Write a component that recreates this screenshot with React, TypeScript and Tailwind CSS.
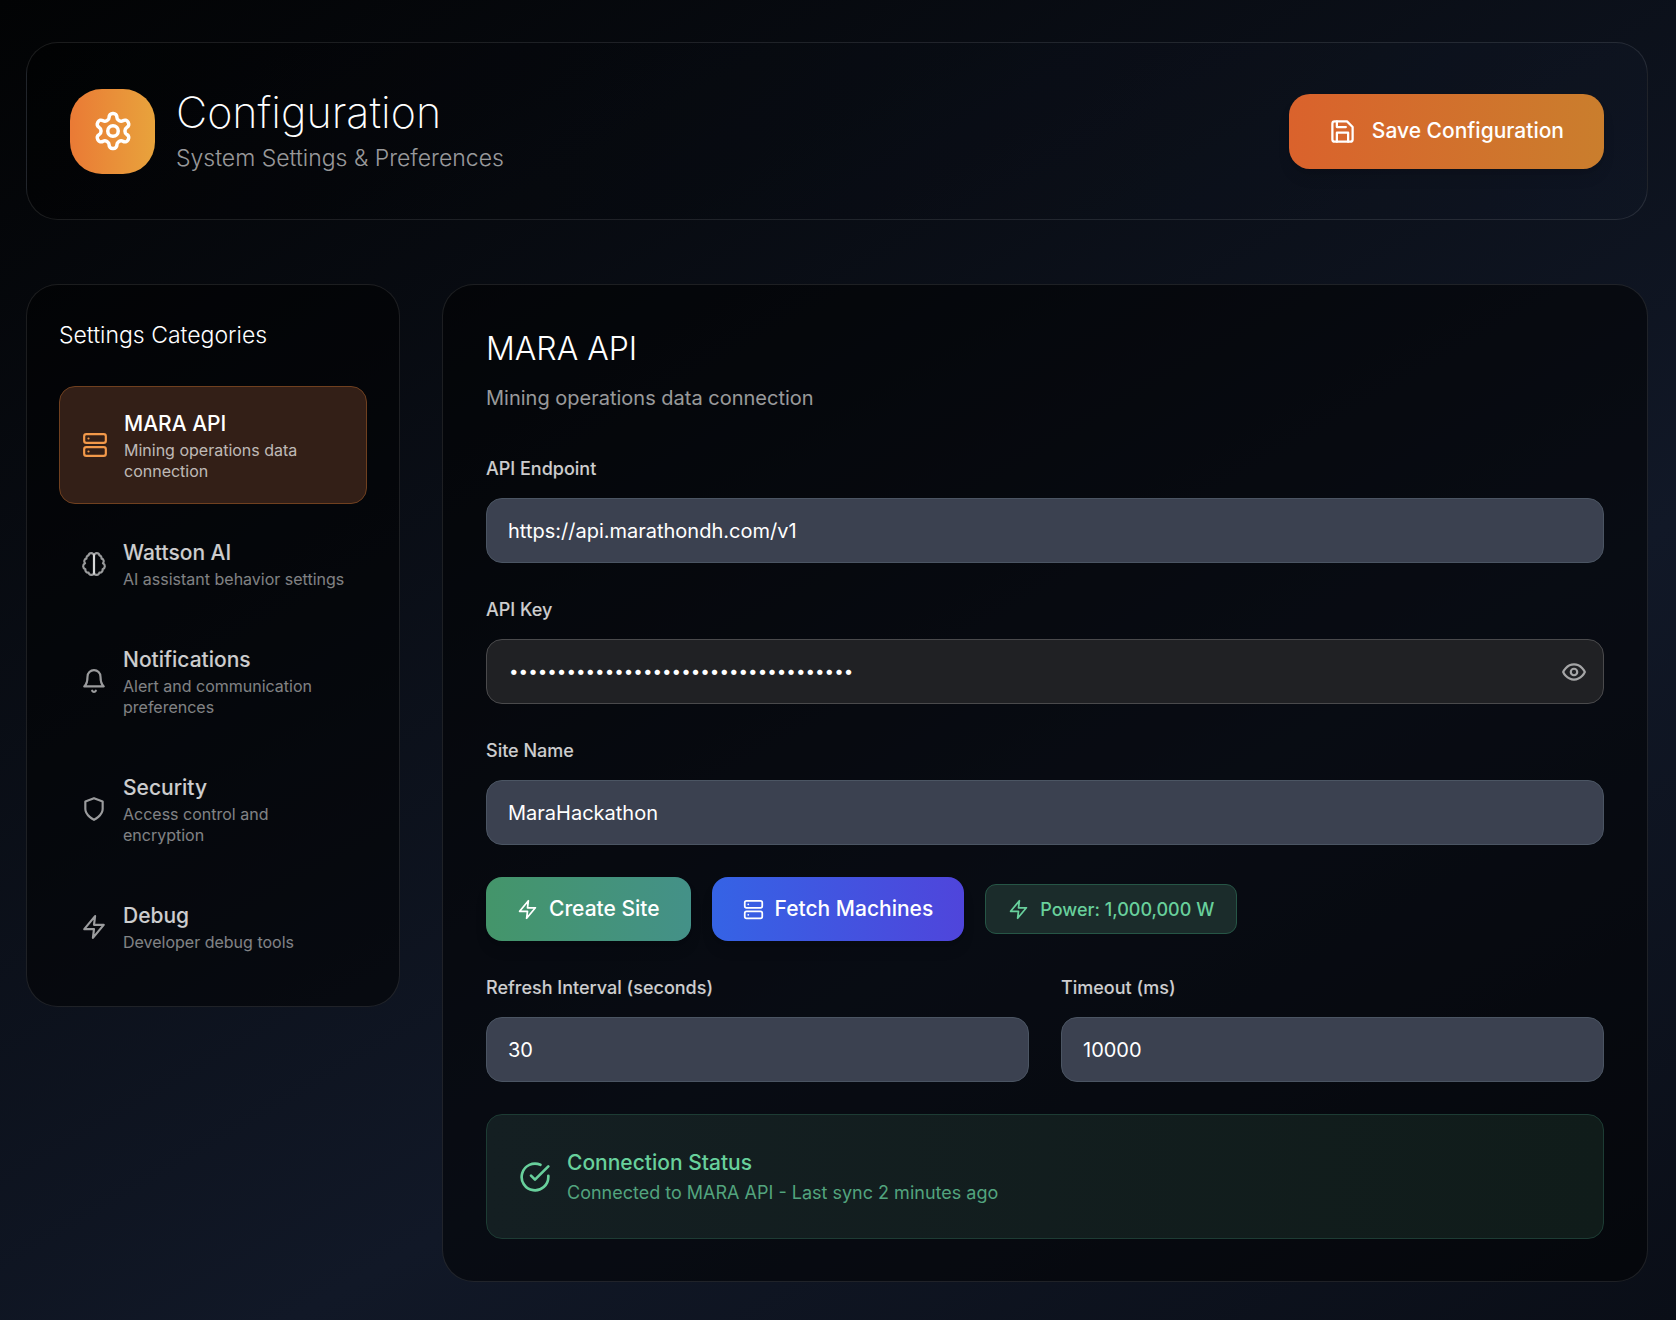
import { useState } from "react";
import type { ReactNode } from "react";

type IconProps = { className?: string };

function Icon({ className, children }: IconProps & { children: ReactNode }) {
  return (
    <svg
      viewBox="0 0 24 24"
      fill="none"
      stroke="currentColor"
      strokeWidth="2"
      strokeLinecap="round"
      strokeLinejoin="round"
      aria-hidden="true"
      className={className}
    >
      {children}
    </svg>
  );
}

const Settings = ({ className }: IconProps) => (
  <Icon className={className}>
    <path d="M12.22 2h-.44a2 2 0 0 0-2 2v.18a2 2 0 0 1-1 1.73l-.43.25a2 2 0 0 1-2 0l-.15-.08a2 2 0 0 0-2.73.73l-.22.38a2 2 0 0 0 .73 2.73l.15.1a2 2 0 0 1 1 1.72v.51a2 2 0 0 1-1 1.74l-.15.09a2 2 0 0 0-.73 2.73l.22.38a2 2 0 0 0 2.73.73l.15-.08a2 2 0 0 1 2 0l.43.25a2 2 0 0 1 1 1.73V20a2 2 0 0 0 2 2h.44a2 2 0 0 0 2-2v-.18a2 2 0 0 1 1-1.73l.43-.25a2 2 0 0 1 2 0l.15.08a2 2 0 0 0 2.73-.73l.22-.39a2 2 0 0 0-.73-2.73l-.15-.08a2 2 0 0 1-1-1.74v-.5a2 2 0 0 1 1-1.74l.15-.09a2 2 0 0 0 .73-2.73l-.22-.38a2 2 0 0 0-2.73-.73l-.15.08a2 2 0 0 1-2 0l-.43-.25a2 2 0 0 1-1-1.73V4a2 2 0 0 0-2-2z" />
    <circle cx="12" cy="12" r="3" />
  </Icon>
);

const Save = ({ className }: IconProps) => (
  <Icon className={className}>
    <path d="M19 21H5a2 2 0 0 1-2-2V5a2 2 0 0 1 2-2h11l5 5v11a2 2 0 0 1-2 2z" />
    <polyline points="17 21 17 13 7 13 7 21" />
    <polyline points="7 3 7 8 15 8" />
  </Icon>
);

const Server = ({ className }: IconProps) => (
  <Icon className={className}>
    <rect width="20" height="8" x="2" y="2" rx="2" ry="2" />
    <rect width="20" height="8" x="2" y="14" rx="2" ry="2" />
    <line x1="6" x2="6.01" y1="6" y2="6" />
    <line x1="6" x2="6.01" y1="18" y2="18" />
  </Icon>
);

const Brain = ({ className }: IconProps) => (
  <Icon className={className}>
    <path d="M9.5 2A2.5 2.5 0 0 1 12 4.5v15a2.5 2.5 0 0 1-4.96.44 2.5 2.5 0 0 1-2.96-3.08 3 3 0 0 1-.34-5.58 2.5 2.5 0 0 1 1.32-4.24 2.5 2.5 0 0 1 1.98-3A2.5 2.5 0 0 1 9.5 2Z" />
    <path d="M14.5 2A2.5 2.5 0 0 0 12 4.5v15a2.5 2.5 0 0 0 4.96.44 2.5 2.5 0 0 0 2.96-3.08 3 3 0 0 0 .34-5.58 2.5 2.5 0 0 0-1.32-4.24 2.5 2.5 0 0 0-1.98-3A2.5 2.5 0 0 0 14.5 2Z" />
  </Icon>
);

const Bell = ({ className }: IconProps) => (
  <Icon className={className}>
    <path d="M6 8a6 6 0 0 1 12 0c0 7 3 9 3 9H3s3-2 3-9" />
    <path d="M10.3 21a1.94 1.94 0 0 0 3.4 0" />
  </Icon>
);

const Shield = ({ className }: IconProps) => (
  <Icon className={className}>
    <path d="M12 22s8-4 8-10V5l-8-3-8 3v7c0 6 8 10 8 10" />
  </Icon>
);

const Zap = ({ className }: IconProps) => (
  <Icon className={className}>
    <polygon points="13 2 3 14 12 14 11 22 21 10 12 10 13 2" />
  </Icon>
);

const Eye = ({ className }: IconProps) => (
  <Icon className={className}>
    <path d="M2 12s3-7 10-7 10 7 10 7-3 7-10 7-10-7-10-7Z" />
    <circle cx="12" cy="12" r="3" />
  </Icon>
);

const CheckCircle = ({ className }: IconProps) => (
  <Icon className={className}>
    <path d="M22 11.08V12a10 10 0 1 1-5.93-9.14" />
    <path d="m9 11 3 3L22 4" />
  </Icon>
);

type Category = {
  name: string;
  description: string;
  icon: (props: IconProps) => ReactNode;
};

const categories: Category[] = [
  { name: "MARA API", description: "Mining operations data\nconnection", icon: Server },
  { name: "Wattson AI", description: "AI assistant behavior settings", icon: Brain },
  { name: "Notifications", description: "Alert and communication\npreferences", icon: Bell },
  { name: "Security", description: "Access control and\nencryption", icon: Shield },
  { name: "Debug", description: "Developer debug tools", icon: Zap },
];

function Field({ id, label, children }: { id: string; label: string; children: ReactNode }) {
  return (
    <div>
      <label
        htmlFor={id}
        className="mb-3.5 block text-[18px] leading-[30px] font-medium text-white/80"
      >
        {label}
      </label>
      {children}
    </div>
  );
}

function TextInput({ id, value }: { id: string; value: string }) {
  return (
    <input
      id={id}
      type="text"
      defaultValue={value}
      className="block h-[65px] w-full rounded-2xl border border-[#4b5563] bg-[#3b4150] px-[21px] text-[20px] text-white outline-none"
    />
  );
}

function CategoryItem({
  category,
  active,
  onSelect,
}: {
  category: Category;
  active: boolean;
  onSelect: () => void;
}) {
  const CategoryIcon = category.icon;
  return (
    <button
      type="button"
      onClick={onSelect}
      className={
        active
          ? "flex w-full items-center gap-4 rounded-2xl border border-[#70401f] bg-[#331f17] py-[21px] pr-4 pl-[22px] text-left"
          : "flex w-full items-center gap-4 rounded-2xl py-[21px] pr-4 pl-[22px] text-left"
      }
    >
      <CategoryIcon
        className={active ? "size-[26px] shrink-0 text-[#f3994a]" : "size-[26px] shrink-0 text-white/60"}
      />
      <span className="block min-w-0">
        <span
          className={
            active
              ? "block text-[21px] leading-8 font-medium text-white"
              : "block text-[21px] leading-8 font-medium text-white/80"
          }
        >
          {category.name}
        </span>
        <span
          className={
            active
              ? "block text-base leading-[21px] whitespace-pre-line text-white/70"
              : "block text-base leading-[21px] whitespace-pre-line text-white/50"
          }
        >
          {category.description}
        </span>
      </span>
    </button>
  );
}

export default function App() {
  const [selected, setSelected] = useState(0);
  const [showKey, setShowKey] = useState(false);

  return (
    <div className="min-h-screen bg-[linear-gradient(150deg,#020304_0%,#111827_65%,#0a0e17_100%)] pt-[42px] pr-7 pb-[38px] pl-[26px] font-['Inter',sans-serif] text-white">
      <header className="mb-16 flex items-center justify-between rounded-[32px] border border-white/10 bg-[linear-gradient(to_right,rgba(0,0,0,0.4),rgba(17,24,39,0.4))] px-[43px] py-[42px]">
        <div className="flex items-center gap-[21px]">
          <div className="flex size-[85px] items-center justify-center rounded-[32px] bg-[linear-gradient(to_right,#ea7a35,#e8a33c)]">
            <Settings className="size-[42px] text-white" />
          </div>
          <div>
            <h1 className="text-[43px] leading-[54px] font-extralight">Configuration</h1>
            <p className="text-[23px] leading-[38px] font-light text-white/60">
              System Settings &amp; Preferences
            </p>
          </div>
        </div>
        <button
          type="button"
          className="flex h-[75px] items-center gap-4 rounded-[21px] bg-[linear-gradient(to_right,#da622c,#ca7e2d)] px-10 text-[21px] font-medium text-white shadow-lg"
        >
          <Save className="size-[27px]" />
          Save Configuration
        </button>
      </header>

      <div className="flex items-start gap-[42px]">
        <aside className="w-[374px] shrink-0 rounded-[32px] border border-white/10 bg-black/50 p-8">
          <h2 className="mb-[33px] text-[23px] leading-9 font-light text-white">
            Settings Categories
          </h2>
          <nav aria-label="Settings categories" className="flex flex-col gap-3">
            {categories.map((category, index) => (
              <CategoryItem
                key={category.name}
                category={category}
                active={index === selected}
                onSelect={() => setSelected(index)}
              />
            ))}
          </nav>
        </aside>

        <main className="min-w-0 flex-1 rounded-[32px] border border-white/10 bg-black/50 px-[43px] pt-[43px] pb-[42px]">
          <div className="mb-10">
            <h2 className="mb-3 text-[32px] leading-[42px] font-light">MARA API</h2>
            <p className="text-[20px] leading-8 text-white/60">Mining operations data connection</p>
          </div>

          <form className="flex flex-col gap-8" onSubmit={(event) => event.preventDefault()}>
            <Field id="endpoint" label="API Endpoint">
              <TextInput id="endpoint" value="https://api.marathondh.com/v1" />
            </Field>

            <Field id="api-key" label="API Key">
              <div className="flex h-[65px] items-center rounded-2xl border border-[#4a4a4c] bg-[#202124] pr-4 pl-[22px]">
                <input
                  id="api-key"
                  type={showKey ? "text" : "password"}
                  defaultValue="mara-hackathon-demo-api-key-00000001"
                  className="min-w-0 flex-1 bg-transparent text-[17px] text-white outline-none"
                />
                <button
                  type="button"
                  aria-label="Show API key"
                  onClick={() => setShowKey(!showKey)}
                  className="text-white/60"
                >
                  <Eye className="size-[26px]" />
                </button>
              </div>
            </Field>

            <Field id="site-name" label="Site Name">
              <TextInput id="site-name" value="MaraHackathon" />
            </Field>

            <div className="flex items-center gap-[21px]">
              <button
                type="button"
                className="flex h-16 items-center gap-[11px] rounded-2xl bg-[linear-gradient(to_right,#44956a,#449188)] px-[31px] text-[21px] font-medium text-white shadow-lg"
              >
                <Zap className="size-[21px]" />
                Create Site
              </button>
              <button
                type="button"
                className="flex h-16 items-center gap-[11px] rounded-2xl bg-[linear-gradient(to_right,#3563e5,#4f45db)] px-[31px] text-[21px] font-medium text-white shadow-lg"
              >
                <Server className="size-[21px]" />
                Fetch Machines
              </button>
              <div className="flex h-[50px] items-center gap-[11px] rounded-[11px] border border-[#265646] bg-[#1b2c2b] px-[22px] text-[18px] font-medium text-[#68d09c]">
                <Zap className="size-[21px]" />
                Power: 1,000,000 W
              </div>
            </div>

            <div className="grid grid-cols-2 gap-8">
              <Field id="refresh" label="Refresh Interval (seconds)">
                <TextInput id="refresh" value="30" />
              </Field>
              <Field id="timeout" label="Timeout (ms)">
                <TextInput id="timeout" value="10000" />
              </Field>
            </div>

            <div
              role="status"
              className="flex items-center gap-4 rounded-2xl border border-[#1d3c34] bg-[linear-gradient(to_right,#141f22,#101c1a)] p-8"
            >
              <CheckCircle className="size-8 shrink-0 text-[#68d09c]" />
              <div>
                <p className="text-[21px] leading-8 font-medium text-[#68d09c]">Connection Status</p>
                <p className="text-[18px] leading-[27px] text-[#52a47e]">
                  Connected to MARA API - Last sync 2 minutes ago
                </p>
              </div>
            </div>
          </form>
        </main>
      </div>
    </div>
  );
}
